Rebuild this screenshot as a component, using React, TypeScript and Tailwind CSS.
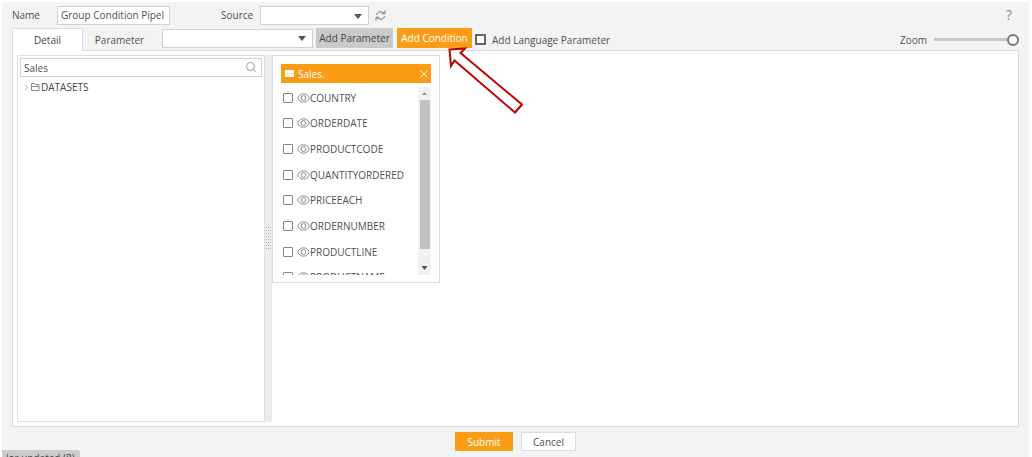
import { ChevronRight, Search, X } from "lucide-react";

const fields = [
  "COUNTRY",
  "ORDERDATE",
  "PRODUCTCODE",
  "QUANTITYORDERED",
  "PRICEEACH",
  "ORDERNUMBER",
  "PRODUCTLINE",
  "PRODUCTNAME",
];

function Dropdown({ label, id, className }: { label: string; id: string; className: string }) {
  return (
    <div className={`relative ${className}`}>
      <select
        id={id}
        aria-label={label}
        className="block h-[19px] w-full appearance-none border border-[#cbd3e0] bg-white"
      >
        <option value=""></option>
      </select>
      <svg viewBox="0 0 8 5" className="pointer-events-none absolute top-[8px] right-[7px] h-[5px] w-2" fill="#555">
        <path d="M0 0h8L4 5z" />
      </svg>
    </div>
  );
}

function EyeIcon() {
  return (
    <svg viewBox="0 0 13 10" className="h-[10px] w-[13px] shrink-0" fill="none" stroke="#8a8a8a">
      <path d="M.6 5C2 2.200 4 .8 6.500 .8S11 2.200 12.400 5C11 7.800 9 9.200 6.500 9.200S2 7.800.6 5z" />
      <circle cx="6.500" cy="5" r="2.400" />
    </svg>
  );
}

function RefreshIcon() {
  return (
    <svg viewBox="0 0 11 11" className="h-[11px] w-[11px]" fill="none" stroke="#777">
      <path d="M1.500 5C1.800 3 3.200 1.800 5.200 1.800c1.500 0 2.800.5 3.800 1.400M10 .5v3.200H6.800M9.500 6C9.200 8 7.800 9.200 5.800 9.200c-1.500 0-2.800-.5-3.800-1.400M1 10.500V7.300h3.200" />
    </svg>
  );
}

function FolderIcon() {
  return (
    <svg viewBox="0 0 9 8" className="h-2 w-[9px]" fill="none" stroke="#8a8a8a">
      <path d="M.5 7.500v-7h3l1 1h3.500v2M.5 7.500h7.500V3.500H.5" />
    </svg>
  );
}

function DatasetCard() {
  return (
    <section className="h-[228px] w-[168px] border border-[#dcdcdc] bg-white px-2 pt-2">
      <header className="flex h-[19px] items-center bg-[#fa9d14] pr-px pl-1 text-white">
        <svg viewBox="0 0 9 7" className="mr-1 h-[7px] w-[9px]">
          <path d="M0 0h9v7H0z" fill="#fff" />
          <path d="M0 3.500h9M3 3.500v3.500" stroke="#fbc67a" strokeWidth=".5" />
        </svg>
        <h2 className="flex-1">Sales.</h2>
        <button type="button" aria-label="Close">
          <X size={12} strokeWidth={2} />
        </button>
      </header>
      <div className="flex h-[192px] overflow-hidden">
        <ul className="grid h-[207px] flex-1 grid-rows-8 pt-0.5">
          {fields.map((field) => (
            <li key={field} className="flex items-center">
              <label className="flex items-center pl-0.5">
                <input
                  type="checkbox"
                  className="mr-1 h-[10px] w-[10px] appearance-none rounded-[1px] border border-[#858585] bg-white"
                />
                <EyeIcon />
                <span>{field}</span>
              </label>
            </li>
          ))}
        </ul>
        <div className="mt-1 flex w-[13px] flex-col items-center bg-[#f1f1f1]">
          <svg viewBox="0 0 5 3" className="my-[5px] h-[3px] w-[5px]" fill="#999">
            <path d="M0 3h5L2.500 0z" />
          </svg>
          <div className="w-[10px] flex-1 bg-[#c1c1c1]" />
          <svg viewBox="0 0 7 4" className="mt-[17px] mb-[5px] h-1 w-[7px]" fill="#505050">
            <path d="M.5 0h6L3.500 4z" />
          </svg>
        </div>
      </div>
    </section>
  );
}

export default function App() {
  return (
    <div className="flex h-screen min-h-[300px] bg-white pt-0.5 pr-[3px] pl-0.5 font-['Open_Sans',sans-serif] text-[10px] leading-[14px] text-[#505050]">
      <div className="flex min-w-0 flex-1 flex-col bg-[#f3f3f3]">
        <div className="flex h-[26px] shrink-0 items-center px-[10px]">
          <label htmlFor="name" className="w-[45px]">
            Name
          </label>
          <input
            id="name"
            defaultValue="Group Condition Pipel"
            className="h-[19px] w-[113px] border border-[#cbd3e0] bg-white pl-[3px]"
          />
          <label htmlFor="source" className="ml-[51px] w-[39px]">
            Source
          </label>
          <Dropdown id="source" label="Source" className="w-[109px]" />
          <button type="button" aria-label="Refresh" className="ml-1.5">
            <RefreshIcon />
          </button>
          <button type="button" aria-label="Help" className="mr-[7px] ml-auto text-sm text-[#888]">
            ?
          </button>
        </div>

        <div className="relative z-10 -mb-px flex h-[23px] shrink-0 px-[10px] whitespace-nowrap">
          <button
            type="button"
            className="w-[71px] border border-b-0 border-[#dcdcdc] bg-white text-[#444]"
          >
            Detail
          </button>
          <button type="button" className="w-[73px]">
            Parameter
          </button>
          <Dropdown id="parameter" label="Parameter" className="ml-1.5 w-[151px] pt-px" />
          <button type="button" className="ml-[3px] h-5 w-[77px] bg-[#cacaca] text-[#444]">
            Add Parameter
          </button>
          <div className="relative ml-1">
            <button type="button" className="block h-5 w-[75px] bg-[#fa9d14] text-white">
              Add Condition
            </button>
            <svg
              viewBox="0 0 76 68"
              className="pointer-events-none absolute top-[18px] left-[50px] h-[68px] w-[76px]"
              fill="#fff"
              stroke="#c00000"
              strokeWidth="2"
            >
              <path d="M2.500 3.500L18 2.500 13.500 7 75 58.500 68 66.500 7.500 14.500 4 20z" />
            </svg>
          </div>
          <label className="ml-[3px] flex items-center">
            <input
              type="checkbox"
              className="mr-1.5 h-[11px] w-[11px] appearance-none border-2 border-[#666] bg-white"
            />
            Add Language Parameter
          </label>
          <label className="ml-auto flex items-center">
            <span className="mr-[7px]">Zoom</span>
            <input
              type="range"
              defaultValue={100}
              className="h-3 w-[85px] appearance-none bg-[linear-gradient(#c6c6c6,#c6c6c6)] bg-[length:100%_3px] bg-center bg-no-repeat [&::-webkit-slider-thumb]:h-3 [&::-webkit-slider-thumb]:w-3 [&::-webkit-slider-thumb]:appearance-none [&::-webkit-slider-thumb]:rounded-full [&::-webkit-slider-thumb]:border-2 [&::-webkit-slider-thumb]:border-[#777] [&::-webkit-slider-thumb]:bg-white"
            />
          </label>
        </div>

        <main className="mr-[10px] ml-[10px] flex min-h-0 flex-1 border border-[#d9d9d9] bg-white p-1">
          <aside className="w-[248px] border border-[#dedede] p-0.5">
            <div className="relative">
              <input
                aria-label="Search datasets"
                defaultValue="Sales"
                className="block h-[19px] w-full border border-[#cbd3e0] bg-white px-[3px]"
              />
              <Search size={12} strokeWidth={2} className="absolute top-[3px] right-[5px] text-[#999]" />
            </div>
            <button type="button" className="mt-[3px] flex items-center pl-0.5 text-[#444]">
              <ChevronRight size={9} strokeWidth={2} className="text-[#888]" />
              <FolderIcon />
              <span className="ml-px">DATASETS</span>
            </button>
          </aside>
          <div className="flex w-[7px] items-center justify-center bg-[#ededed]">
            <svg viewBox="0 0 5 24" className="h-6 w-[5px]" stroke="#b5b5b5" strokeDasharray="1 2">
              <path d="M.5 0v24M2.500 0v24M4.500 0v24" />
            </svg>
          </div>
          <DatasetCard />
        </main>

        <footer className="flex h-[30px] shrink-0 items-end">
          <div className="h-[7px] w-[78px] overflow-hidden rounded-tr-[3px] bg-[#cacaca] pt-px pl-1 whitespace-nowrap text-[#444]">
            lor updated (8)
          </div>
          <div className="flex flex-1 justify-center gap-2 self-start pt-[5px] pr-[78px]">
            <button type="button" className="h-[19px] w-[58px] bg-[#fa9d14] text-white">
              Submit
            </button>
            <button type="button" className="h-[19px] w-[55px] border border-[#dcdcdc] bg-white">
              Cancel
            </button>
          </div>
        </footer>
      </div>
    </div>
  );
}
